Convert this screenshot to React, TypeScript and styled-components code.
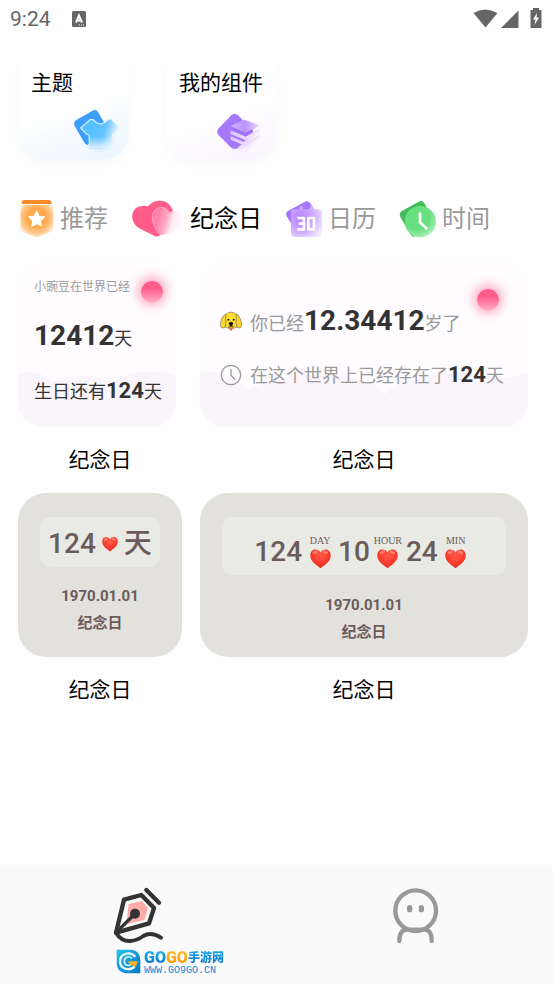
import React from "react";
import styled, { createGlobalStyle } from "styled-components";

const GlobalStyle = createGlobalStyle`
  * { box-sizing: border-box; }
  body {
    margin: 0;
    background: #fefefe;
    color: #000;
    font-family: Roboto, "Noto Sans CJK SC", sans-serif;
  }
  button { border: 0; padding: 0; margin: 0; background: none; font: inherit; color: inherit; cursor: pointer; }
  svg { display: block; flex: none; }
`;

const Page = styled.div`
  min-height: 100vh;
  display: flex;
  flex-direction: column;
`;

const StatusBar = styled.header`
  display: flex;
  align-items: center;
  height: 38px;
  padding: 0 10px;
  color: #666;
  font-size: 21px;
`;
const StatusTime = styled.time`
  margin-right: 20px;
`;
const StatusIcons = styled.div`
  margin-left: auto;
  display: flex;
  align-items: center;
`;

const Shortcuts = styled.nav`
  display: flex;
  gap: 37px;
  padding: 10px 18px 0;
`;
const Shortcut = styled.button<{ $tint: string }>`
  width: 111px;
  height: 112px;
  padding: 19px 0 5px 13px;
  border-radius: 26px;
  display: flex;
  flex-direction: column;
  justify-content: space-between;
  align-items: flex-start;
  background: linear-gradient(160deg, #fff 50%, ${(p) => p.$tint} 100%);
  box-shadow: 0 5px 10px rgba(0, 0, 0, 0.02);
  font-size: 21px;
  line-height: 32px;
  white-space: nowrap;
`;
const ShortcutIcon = styled.span<{ $inset: number }>`
  align-self: flex-end;
  margin-right: ${(p) => p.$inset}px;
`;

const Tabs = styled.div`
  display: flex;
  gap: 22px;
  margin-top: 39px;
  padding: 0 20px;
`;
const Tab = styled.button<{ $active?: boolean }>`
  display: flex;
  align-items: center;
  gap: 4px;
  height: 40px;
  font-size: 24px;
  line-height: 40px;
  white-space: nowrap;
  color: ${(p) => (p.$active ? "#000" : "#999")};
`;

const Gallery = styled.main`
  display: grid;
  grid-template-columns: 1fr 2fr;
  column-gap: 18px;
  padding: 24px 25px 24px 18px;
`;
const Widget = styled.figure`
  margin: 0;
  min-width: 0;
  display: flex;
  flex-direction: column;
`;
const Caption = styled.figcaption`
  text-align: center;
  font-size: 21px;
  line-height: 66px;
`;

const PinkCard = styled.div<{ $wide?: boolean }>`
  position: relative;
  overflow: hidden;
  height: 164px;
  margin-right: ${(p) => (p.$wide ? 0 : 6)}px;
  padding: ${(p) => (p.$wide ? "41px 0 0 20px" : "16px 0 0 16px")};
  border-radius: 26px;
  background: #fefcfe;
  white-space: nowrap;
`;
const Waves = styled.svg`
  position: absolute;
  left: 0;
  bottom: 0;
  width: 100%;
  height: 56px;
`;
const GlowDot = styled.span<{ $top: number; $right: number }>`
  position: absolute;
  top: ${(p) => p.$top}px;
  right: ${(p) => p.$right}px;
  width: 22px;
  height: 22px;
  border-radius: 50%;
  background: linear-gradient(#ff5c8a 35%, #ffb3c9 100%);
  box-shadow: 0 -1px 10px 4px rgba(255, 92, 138, 0.45);
`;
const Note = styled.div`
  position: relative;
  font-size: 12px;
  line-height: 16px;
  color: #999;
`;
const Line = styled.div<{ $gap?: number; $muted?: boolean; $height: number }>`
  position: relative;
  display: flex;
  align-items: center;
  gap: 8px;
  height: ${(p) => p.$height}px;
  margin-top: ${(p) => p.$gap ?? 0}px;
  font-size: 18px;
  line-height: ${(p) => p.$height}px;
  color: ${(p) => (p.$muted ? "#999" : "#333")};
`;
const Strong = styled.b<{ $large?: boolean }>`
  font-size: ${(p) => (p.$large ? 28 : 22)}px;
  font-weight: 700;
  color: #333;
`;

const StoneCard = styled.div`
  height: 164px;
  padding: 24px 22px 0;
  border-radius: 28px;
  background: #e2e1dc;
  color: #6b5b5b;
  text-align: center;
  font-size: 15px;
  font-weight: 700;
  line-height: 27px;
`;
const Counter = styled.div<{ $tall?: boolean }>`
  display: flex;
  align-items: center;
  justify-content: center;
  height: ${(p) => (p.$tall ? 58 : 50)}px;
  padding-top: ${(p) => (p.$tall ? 10 : 3)}px;
  margin-bottom: ${(p) => (p.$tall ? 17 : 16)}px;
  border-radius: 10px;
  background: #e9eae4;
  font-size: 28px;
  font-weight: 500;
  white-space: nowrap;
`;
const SmallHeart = styled.span`
  margin: 0 6px;
`;
const Unit = styled.span`
  width: 36px;
  display: flex;
  flex-direction: column;
  align-items: center;
  font-family: "Liberation Serif", serif;
  font-size: 10px;
  font-weight: 400;
  line-height: 14px;
`;

const BottomBar = styled.nav`
  position: relative;
  display: flex;
  align-items: flex-start;
  height: 118px;
  margin-top: auto;
  padding-top: 18px;
  background: #fafafa;
  box-shadow: 0 0 3px rgba(0, 0, 0, 0.03);
`;
const BottomItem = styled.button`
  flex: 1;
  display: flex;
  justify-content: center;
`;
const SiteMark = styled.a`
  position: absolute;
  left: 116px;
  bottom: 8px;
  display: flex;
  gap: 3px;
  text-decoration: none;
  color: #1587d4;
`;
const SiteText = styled.span`
  display: flex;
  flex-direction: column;
`;
const SiteName = styled.span`
  display: flex;
  align-items: center;
  height: 17px;
  font-size: 16px;
  line-height: 16px;
`;
const SiteWord = styled.span<{ $from: string; $to: string; $cjk?: boolean }>`
  font-size: ${(p) => (p.$cjk ? 12 : 16)}px;
  font-weight: 900;
  background: linear-gradient(${(p) => p.$from}, ${(p) => p.$to});
  background-clip: text;
  color: transparent;
`;
const SiteUrl = styled.span`
  height: 10px;
  font-family: "Liberation Mono", monospace;
  font-size: 10px;
  line-height: 10px;
`;

const ThemeIcon = () => (
  <svg width="50" height="50" viewBox="210 315 150 150" aria-hidden="true">
    <defs>
      <linearGradient id="shirt" gradientUnits="userSpaceOnUse" x1="270" y1="385" x2="346" y2="410">
        <stop offset="0" stopColor="#56bfff" />
        <stop offset="0.55" stopColor="#66c4ff" />
        <stop offset="1" stopColor="#e2f3ff" />
      </linearGradient>
      <linearGradient id="shirtEdge" gradientUnits="userSpaceOnUse" x1="0" y1="410" x2="0" y2="447">
        <stop offset="0" stopColor="#e6f5ff" stopOpacity="0" />
        <stop offset="1" stopColor="#e6f5ff" />
      </linearGradient>
      <filter id="soft" x="-50%" y="-50%" width="200%" height="200%"><feGaussianBlur stdDeviation="10" /></filter>
    </defs>
    <circle cx="298" cy="410" r="36" fill="#8dceff" opacity="0.5" filter="url(#soft)" />
    <path d="M230 359 278 332Q288 327 294 336L328 395 262 435Q256 434 252 426L224 378Q219 365 230 359Z" fill="#3b9dfc" />
    <path d="M270 359H280Q302 384 324 359H334L358 383 342 401 336 396V446H268V405L260 402 242 384Z" fill="url(#shirt)" />
    <path d="M268 405H336V446H268Z" fill="url(#shirtEdge)" />
    <path d="M268 446V405L260 402 242 384 270 359H280Q302 384 324 359H334" fill="none" stroke="#d3edff" strokeWidth="4" strokeLinejoin="round" />
  </svg>
);

const LayersIcon = () => (
  <svg width="50" height="50" viewBox="639 315 150 150" aria-hidden="true">
    <defs>
      <linearGradient id="layer" x1="0" x2="1">
        <stop offset="0" stopColor="#d3b5ff" />
        <stop offset="0.5" stopColor="#bc92fb" />
        <stop offset="1" stopColor="#eee1ff" />
      </linearGradient>
      <linearGradient id="sheet" gradientUnits="userSpaceOnUse" x1="692" y1="0" x2="780" y2="0">
        <stop offset="0" stopColor="#dcc6ff" />
        <stop offset="1" stopColor="#f3eaff" />
      </linearGradient>
      <filter id="softLayer" x="-50%" y="-50%" width="200%" height="200%"><feGaussianBlur stdDeviation="10" /></filter>
    </defs>
    <circle cx="722" cy="410" r="36" fill="#cda8ff" opacity="0.45" filter="url(#softLayer)" />
    <path d="M694 346Q704 337 714 346L758 390Q762 396 756 402L714 443Q704 450 694 443L655 404Q648 395 655 386Z" fill="#a678fb" />
    <path d="M692 409 737 428 780 403V413L737 438 692 419Z" fill="url(#sheet)" />
    <path d="M692 391 737 410 780 385V395L737 421 692 402Z" fill="url(#sheet)" />
    <path d="M692 377 733 359 780 376 737 402Z" fill="url(#layer)" />
    <path d="M698 382 737 398 758 387V394L737 406 698 390Z" fill="#9f70f5" />
  </svg>
);

const StarIcon = () => (
  <svg width="36" height="40" viewBox="30 42 108 120" aria-hidden="true">
    <defs>
      <radialGradient id="badge" gradientUnits="userSpaceOnUse" cx="80" cy="98" r="62">
        <stop offset="0.45" stopColor="#ffa94c" />
        <stop offset="0.75" stopColor="#ffc98d" />
        <stop offset="1" stopColor="#fff8f0" />
      </radialGradient>
    </defs>
    <path d="M35 57V53Q35 45 43 45H116Q124 45 124 53V57Z" fill="#fb8b2b" />
    <path d="M31 60H130V138L80 158 31 138Z" fill="url(#badge)" />
    <path d="M80 79 87 94 103 96 91 107 94 123 80 115 66 123 69 107 57 96 73 94Z" fill="#fff" stroke="#fff" strokeWidth="4" strokeLinejoin="round" />
  </svg>
);

const LoveIcon = () => (
  <svg width="56" height="40" viewBox="360 42 168 120" aria-hidden="true">
    <defs>
      <linearGradient id="love" gradientUnits="userSpaceOnUse" x1="436" y1="95" x2="516" y2="118">
        <stop offset="0.1" stopColor="#ff82aa" />
        <stop offset="0.4" stopColor="#ffa9c5" />
        <stop offset="0.65" stopColor="#ffecf3" />
        <stop offset="1" stopColor="#fffafc" />
      </linearGradient>
    </defs>
    <path d="M415 64C430 42 476 38 488 76Q490 84 486 92L452 148Q446 158 434 153L388 130C358 112 360 72 390 64Q403 60 415 64Z" fill="#ff5c8a" />
    <path d="M478 82C496 72 522 80 522 104C522 127 490 143 452 151C438 138 425 115 427 94C430 63 466 58 478 82Z" fill="url(#love)" />
    <path d="M452 151C438 138 425 115 427 94C430 63 466 58 478 82" fill="none" stroke="#ff9fbe" strokeWidth="3" />
  </svg>
);

const CalendarIcon = () => (
  <svg width="40" height="40" viewBox="42 42 120 120" aria-hidden="true">
    <defs>
      <radialGradient id="calendar" gradientUnits="userSpaceOnUse" cx="91" cy="99" r="75">
        <stop offset="0.15" stopColor="#bd8cff" />
        <stop offset="0.6" stopColor="#d1b1ff" />
        <stop offset="1" stopColor="#f6edff" />
      </radialGradient>
    </defs>
    <path d="M54 78 105 50Q115 46 121 55L138 84 72 130 50 94Q45 84 54 78Z" fill="#a777fb" />
    <path d="M73 73H87V68Q90 62 94 62Q98 62 99 68V73H119V68Q122 62 126 62Q130 62 131 68V73H144Q156 73 156 85V145Q156 156 144 156H74Q63 156 63 145V85Q63 73 73 73Z" fill="url(#calendar)" />
    <path d="M82 99H102V133H82M86 116H102M115 99H132V133H115Z" fill="none" stroke="#fff" strokeWidth="8" strokeLinejoin="round" />
  </svg>
);

const ClockTabIcon = () => (
  <svg width="40" height="40" viewBox="384 42 120 120" aria-hidden="true">
    <defs>
      <radialGradient id="dial" gradientUnits="userSpaceOnUse" cx="440" cy="95" r="78">
        <stop offset="0.5" stopColor="#67df7e" />
        <stop offset="0.72" stopColor="#91e9a2" />
        <stop offset="1" stopColor="#e6faea" />
      </radialGradient>
    </defs>
    <path d="M396 78 446 50Q457 44 463 55L480 84 432 156Q425 155 421 148L391 96Q386 84 396 78Z" fill="#43bd5c" />
    <circle cx="451" cy="110" r="47" fill="url(#dial)" />
    <path d="M450 86V112L469 130" fill="none" stroke="#fff" strokeWidth="8" strokeLinecap="round" />
  </svg>
);

const DogIcon = () => (
  <svg width="22" height="22" viewBox="0 0 66 66" aria-hidden="true">
    <path d="M14 13Q33-6 52 13L53 46Q33 60 13 46Z" fill="#ffdd33" stroke="#77705a" strokeWidth="2" />
    <path d="M17 9Q2 18 1 44Q4 54 15 49Q20 34 17 22ZM49 9Q64 18 65 44Q62 54 51 49Q46 34 49 22Z" fill="#fcd52c" stroke="#77705a" strokeWidth="2" />
    <circle cx="25" cy="26" r="3" fill="#222" />
    <circle cx="41" cy="26" r="3" fill="#222" />
    <path d="M27 36Q33 31 39 36L36 44H30Z" fill="#111" stroke="#111" strokeWidth="2" />
    <path d="M25 48Q33 46 41 48" fill="none" stroke="#4a3c20" strokeWidth="3" />
    <path d="M29 50H37V56Q33 62 29 56Z" fill="#f0644d" />
  </svg>
);

const ClockIcon = () => (
  <svg width="22" height="22" viewBox="0 0 22 22" fill="none" stroke="#999" strokeWidth="1.3" aria-hidden="true">
    <circle cx="11" cy="11" r="9.7" />
    <path d="M11 5V11.5L15 15.5" />
  </svg>
);

const HeartIcon = ({ size }: { size: number }) => (
  <svg width={size} height={size} viewBox="0 0 64 64" aria-hidden="true">
    <defs>
      <radialGradient id="emoji" cx="0.5" cy="0.35" r="0.65">
        <stop offset="0" stopColor="#ff5a49" />
        <stop offset="0.6" stopColor="#fa3b2d" />
        <stop offset="1" stopColor="#dc2a20" />
      </radialGradient>
    </defs>
    <path d="M32 14C26 0 1 0 1 23C1 42 20 52 32 62C44 52 63 42 63 23C63 0 38 0 32 14Z" fill="url(#emoji)" />
    <ellipse cx="16" cy="13" rx="9" ry="5" fill="#ffa091" opacity="0.65" transform="rotate(-20 16 13)" />
    <ellipse cx="47" cy="13" rx="9" ry="5" fill="#ffa091" opacity="0.65" transform="rotate(20 47 13)" />
  </svg>
);

const PenIcon = () => (
  <svg width="56" height="62" viewBox="90 72 168 186" fill="none" stroke="#333" strokeWidth="13" strokeLinecap="round" strokeLinejoin="round" aria-hidden="true">
    <path d="M146 132 186 123 204 145 193 180 139 193Z" fill="#ffaca9" stroke="none" />
    <path d="M108 218 132 119 184 105 222 144 207 190Z" />
    <path d="M108 218 164 162" strokeWidth="10" />
    <circle cx="165" cy="161" r="15" fill="#333" stroke="none" />
    <path d="M199 90 237 128" />
    <path d="M108 218C132 258 172 241 190 228Q213 214 243 233" strokeWidth="12" />
  </svg>
);

const FaceIcon = () => (
  <svg width="56" height="62" viewBox="78 72 168 186" fill="none" stroke="#999" strokeWidth="13" strokeLinecap="round" aria-hidden="true">
    <circle cx="164" cy="152" r="61" />
    <path d="M146 143V149M181 143V149" strokeWidth="16" />
    <path d="M115 243C115 221 121 209 138 209H190C207 209 212 221 212 243" />
  </svg>
);

const SiteLogo = () => (
  <svg width="25" height="25" viewBox="0 0 75 75" aria-hidden="true">
    <defs>
      <linearGradient id="mark" x1="0" y1="0" x2="1" y2="1">
        <stop offset="0" stopColor="#21c1ee" />
        <stop offset="1" stopColor="#0873c9" />
      </linearGradient>
    </defs>
    <path d="M2 2H48Q73 7 73 33V73H28Q2 68 2 43Z" fill="url(#mark)" />
    <path d="M58 23C43 5 12 13 12 37C12 62 44 68 56 51" fill="none" stroke="#f2fcff" strokeWidth="7" />
    <path d="M48 28C37 18 24 26 25 38C26 50 41 54 47 43" fill="none" stroke="#d5f4ff" strokeWidth="5" />
    <path d="M36 37H66Q64 49 55 55L48 47H42Z" fill="#ffb126" />
  </svg>
);

const App = () => (
  <>
    <GlobalStyle />
    <Page>
      <StatusBar>
        <StatusTime>9:24</StatusTime>
        <svg width="16" height="17" viewBox="0 0 16 17" aria-hidden="true">
          <rect x="1" y="0" width="14" height="16" rx="1.5" fill="#666" />
          <path d="M5 11.500 8 4.500 11 11.500M6 9.500H10" fill="none" stroke="#fff" strokeWidth="2" />
          <path d="M8 14H14" stroke="#fff" strokeWidth="1" strokeDasharray="1 1" />
        </svg>
        <StatusIcons>
          <svg width="70" height="22" viewBox="0 0 70 22" fill="#666" aria-hidden="true">
            <path d="M0.500 5Q12 -2 24.500 5L12.500 19.500Z" />
            <path d="M28 20 45.500 2.500V20Z" />
            <path d="M57.500 2H60V0H66V2H68.500V20H57.500Z" />
            <path d="M64 5 60 11.500H62.500L61.500 17 66 9.500H63.500Z" fill="#fff" />
          </svg>
        </StatusIcons>
      </StatusBar>

      <Shortcuts>
        <Shortcut $tint="#eaf5ff">
          主题
          <ShortcutIcon $inset={9}><ThemeIcon /></ShortcutIcon>
        </Shortcut>
        <Shortcut $tint="#faf5ff">
          我的组件
          <ShortcutIcon $inset={14}><LayersIcon /></ShortcutIcon>
        </Shortcut>
      </Shortcuts>

      <Tabs role="tablist">
        <Tab role="tab" aria-selected={false}><StarIcon />推荐</Tab>
        <Tab role="tab" aria-selected $active><LoveIcon />纪念日</Tab>
        <Tab role="tab" aria-selected={false}><CalendarIcon />日历</Tab>
        <Tab role="tab" aria-selected={false}><ClockTabIcon />时间</Tab>
      </Tabs>

      <Gallery>
        <Widget>
          <PinkCard>
            <Waves viewBox="0 0 158 56" preserveAspectRatio="none" aria-hidden="true">
              <path d="M0 3Q18-3 34 10Q66-1 94 10Q128-6 158 5V56H0Z" fill="#f9f5fb" />
            </Waves>
            <GlowDot $top={18} $right={13} />
            <Note>小豌豆在世界已经</Note>
            <Line $gap={24} $height={36}><span><Strong $large>12412</Strong>天</span></Line>
            <Line $gap={22} $height={28}><span>生日还有<Strong>124</Strong>天</span></Line>
          </PinkCard>
          <Caption>纪念日</Caption>
        </Widget>

        <Widget>
          <PinkCard $wide>
            <Waves viewBox="0 0 328 56" preserveAspectRatio="none" aria-hidden="true">
              <path d="M0 2Q24-2 48 18L70 10Q120-5 174 13L184 24 197 12Q260-6 300 8L328 2V56H0Z" fill="#f9f5fb" />
            </Waves>
            <GlowDot $top={26} $right={29} />
            <Line $height={36} $muted><DogIcon /><span>你已经<Strong $large>12.34412</Strong>岁了</span></Line>
            <Line $gap={21} $height={28} $muted><ClockIcon /><span>在这个世界上已经存在了<Strong>124</Strong>天</span></Line>
          </PinkCard>
          <Caption>纪念日</Caption>
        </Widget>

        <Widget>
          <StoneCard>
            <Counter>124<SmallHeart><HeartIcon size={16} /></SmallHeart>天</Counter>
            <div>1970.01.01</div>
            <div>纪念日</div>
          </StoneCard>
          <Caption>纪念日</Caption>
        </Widget>

        <Widget>
          <StoneCard>
            <Counter $tall>
              124<Unit>DAY<HeartIcon size={21} /></Unit>
              10<Unit>HOUR<HeartIcon size={21} /></Unit>
              24<Unit>MIN<HeartIcon size={21} /></Unit>
            </Counter>
            <div>1970.01.01</div>
            <div>纪念日</div>
          </StoneCard>
          <Caption>纪念日</Caption>
        </Widget>
      </Gallery>

      <BottomBar>
        <BottomItem aria-label="创作"><PenIcon /></BottomItem>
        <BottomItem aria-label="我的"><FaceIcon /></BottomItem>
        <SiteMark href="#">
          <SiteLogo />
          <SiteText>
            <SiteName>
              <SiteWord $from="#20b8ee" $to="#086dc4">GO</SiteWord>
              <SiteWord $from="#ffc02e" $to="#f78b00">GO</SiteWord>
              <SiteWord $from="#20a8e8" $to="#086dc4" $cjk>手游网</SiteWord>
            </SiteName>
            <SiteUrl>WWW.GO9GO.CN</SiteUrl>
          </SiteText>
        </SiteMark>
      </BottomBar>
    </Page>
  </>
);

export default App;
